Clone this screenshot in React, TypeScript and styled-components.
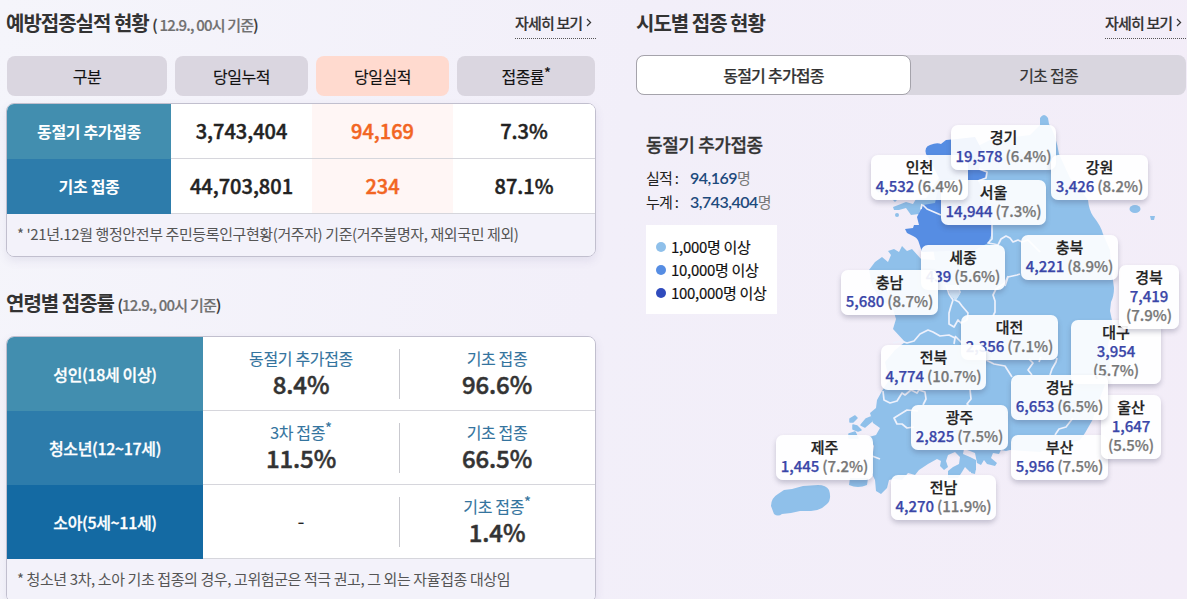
import { FC, ReactNode } from "react";
import styled, { createGlobalStyle } from "styled-components";

const GlobalStyle = createGlobalStyle`
  * {
    box-sizing: border-box;
  }
  body {
    margin: 0;
    font-family: "Noto Sans CJK KR", "Noto Sans", sans-serif;
    color: #222;
  }
`;

const Page = styled.div`
  display: flex;
  gap: 40px;
  width: 1187px;
  height: 599px;
  padding-left: 6px;
  overflow: hidden;
  background: linear-gradient(100deg, #f5f5fb 0%, #f2eff9 50%, #f3edf8 100%);
`;

const Column = styled.section<{ $width: number }>`
  flex: 0 0 ${({ $width }) => $width}px;
  display: flex;
  flex-direction: column;
`;

const Heading = styled.div<{ $top: number; $height: number }>`
  display: flex;
  flex: none;
  align-items: flex-start;
  justify-content: space-between;
  height: ${({ $height }) => $height}px;
  padding-top: ${({ $top }) => $top}px;
`;

const Title = styled.h2`
  margin: 0;
  font-size: 20px;
  font-weight: 700;
  line-height: 24px;
  letter-spacing: -1px;
  color: #333;
  white-space: pre;
`;

const BaseDate = styled.span`
  font-size: 15px;
  font-weight: 500;
  letter-spacing: -0.8px;
  color: #333;
  -webkit-text-stroke: 0.2px;

  em {
    font-style: normal;
    color: #707070;
  }
`;

const MoreLink = styled.a<{ $width: number }>`
  display: flex;
  align-items: center;
  width: ${({ $width }) => $width}px;
  height: 28px;
  padding-bottom: 5px;
  border-bottom: 1px dotted #555;
  font-size: 15px;
  font-weight: 500;
  letter-spacing: -0.85px;
  color: #333;
  white-space: nowrap;
  -webkit-text-stroke: 0.2px;

  svg {
    margin-left: 4px;
  }
`;

const PillRow = styled.div`
  display: grid;
  flex: none;
  grid-template-columns: 160px 133px 133px 138px;
  justify-content: space-between;
  height: 40px;
  padding: 0 1px;
  margin-bottom: 7px;
`;

const Pill = styled.div<{ $hot?: boolean }>`
  display: flex;
  align-items: center;
  justify-content: center;
  border-radius: 8px;
  background: ${({ $hot }) => ($hot ? "#ffdacf" : "#dad6e0")};
  font-size: 16px;
  letter-spacing: -0.5px;
  color: #111;
  -webkit-text-stroke: 0.15px;
`;

const Star = styled.sup`
  align-self: flex-start;
  font-size: 15px;
  line-height: 1;
  vertical-align: 4px;
`;

const Board = styled.div`
  flex: none;
  border: 1px solid #c1bfce;
  border-radius: 8px;
  overflow: hidden;
  box-shadow: 0 4px 10px rgba(90, 80, 140, 0.1);
`;

const BoardRow = styled.div<{ $columns: string; $height: number }>`
  display: grid;
  grid-template-columns: ${({ $columns }) => $columns};
  height: ${({ $height }) => $height}px;
  background: #fff;
`;

const RowHead = styled.div<{ $color: string; $bold?: boolean }>`
  display: flex;
  align-items: center;
  justify-content: center;
  padding-bottom: 1px;
  background: ${({ $color }) => $color};
  font-size: 16px;
  font-weight: ${({ $bold }) => ($bold ? 700 : 500)};
  letter-spacing: -0.35px;
  color: #fff;
  -webkit-text-stroke: ${({ $bold }) => ($bold ? 0 : "0.3px")};
`;

const Cell = styled.div<{ $hot?: boolean }>`
  display: flex;
  align-items: center;
  justify-content: center;
  padding-bottom: 1px;
  border-bottom: 1px solid #d6d6dc;
  background: ${({ $hot }) => ($hot ? "#fff6f5" : "#fff")};
  font-size: 20px;
  font-weight: 500;
  color: ${({ $hot }) => ($hot ? "#f26522" : "#222")};
  -webkit-text-stroke: 0.45px;
`;

const RateCell = styled.div<{ $divided?: boolean }>`
  position: relative;
  display: flex;
  flex-direction: column;
  align-items: center;
  justify-content: center;
  padding-bottom: 4px;
  border-bottom: 1px solid #d6d6dc;

  &::after {
    content: "";
    display: ${({ $divided }) => ($divided ? "block" : "none")};
    position: absolute;
    top: 12px;
    right: -1px;
    width: 1px;
    height: 50px;
    background: #c9c9cf;
  }
`;

const RateLabel = styled.div`
  display: flex;
  height: 24px;
  font-size: 16px;
  line-height: 24px;
  letter-spacing: -0.35px;
  color: #34749e;
  -webkit-text-stroke: 0.1px;
`;

const RateValue = styled.div`
  font-size: 24px;
  font-weight: 500;
  line-height: 28px;
  letter-spacing: -0.1px;
  color: #333;
  -webkit-text-stroke: 0.5px;
`;

const NoRate = styled.div`
  padding-top: 2px;
  font-size: 20px;
  color: #222;
`;

const Note = styled.p<{ $height: number }>`
  margin: 0;
  height: ${({ $height }) => $height}px;
  padding: 0 10px;
  background: #f3f2fa;
  font-size: 15px;
  line-height: 40px;
  letter-spacing: -0.4px;
  color: #555;
  white-space: nowrap;
`;

const Tabs = styled.div`
  display: flex;
  flex: none;
  width: 550px;
  height: 40px;
  border-radius: 8px;
  background: #d9d6df;
`;

const Tab = styled.button<{ $active?: boolean }>`
  flex: 0 0 275px;
  padding: 0 0 1px;
  border: ${({ $active }) => ($active ? "1px solid #a5a3ab" : "none")};
  border-radius: 8px;
  background: ${({ $active }) => ($active ? "#fff" : "transparent")};
  font-family: inherit;
  font-size: 16px;
  font-weight: ${({ $active }) => ($active ? 500 : 400)};
  letter-spacing: -0.75px;
  color: #333;
  -webkit-text-stroke: 0.2px;
`;

const MapArea = styled.div`
  position: relative;
  flex: 1;
  padding: 37px 10px 0;
`;

const MapTitle = styled.h3`
  margin: 0 0 10px;
  font-size: 18px;
  font-weight: 500;
  line-height: 24px;
  letter-spacing: -0.4px;
  color: #333;
  -webkit-text-stroke: 0.3px;
`;

const Stat = styled.div`
  display: flex;
  height: 24px;
  font-size: 15px;
  line-height: 24px;
  letter-spacing: -0.7px;
  color: #222;

  dt {
    width: 44px;
  }
  span {
    color: #777;
  }
`;

const StatNumber = styled.b`
  font-family: Lato, sans-serif;
  font-size: 16px;
  font-weight: 600;
  letter-spacing: -0.5px;
  color: #1d4a7c;
`;

const Legend = styled.ul`
  display: flex;
  flex-direction: column;
  width: 131px;
  height: 89px;
  margin: 11px 0 0;
  padding: 10px;
  background: #fff;
  list-style: none;
`;

const LegendItem = styled.li<{ $color: string }>`
  display: flex;
  align-items: center;
  gap: 5px;
  height: 23px;
  font-size: 15px;
  line-height: 22px;
  letter-spacing: -0.3px;
  color: #111;
  white-space: nowrap;
  -webkit-text-stroke: 0.15px;

  &::before {
    content: "";
    width: 10px;
    height: 10px;
    border-radius: 50%;
    background: ${({ $color }) => $color};
  }
`;

const MapSvg = styled.svg`
  position: absolute;
  top: 5px;
  left: 124px;
`;

const Pin = styled.div<{ $x: number; $y: number; $w: number; $h: number }>`
  position: absolute;
  left: ${({ $x }) => $x - 636}px;
  top: ${({ $y }) => $y - 95}px;
  width: ${({ $w }) => $w}px;
  height: ${({ $h }) => $h}px;
  padding-top: 3px;
  border-radius: 7px;
  background: rgba(255, 255, 255, 0.92);
  box-shadow: 0 3px 5px rgba(60, 60, 90, 0.25);
  font-size: 15px;
  font-weight: 500;
  line-height: 18px;
  text-align: center;
  white-space: nowrap;
  color: #222;
  -webkit-text-stroke: 0.25px;
`;

const PinValue = styled.div<{ $stacked?: boolean }>`
  display: flex;
  flex-direction: ${({ $stacked }) => ($stacked ? "column" : "row")};
  align-items: center;
  justify-content: center;
  column-gap: 3px;
  line-height: 19px;
  letter-spacing: -0.05px;
  color: #3a46a8;

  span {
    color: #777;
  }
`;

interface Region {
  name: string;
  count: string;
  rate: string;
  x: number;
  y: number;
  w: number;
  stacked?: boolean;
}

const regions: Region[] = [
  { name: "서울", count: "14,944", rate: "7.3%", x: 941, y: 180, w: 105 },
  { name: "부산", count: "5,956", rate: "7.5%", x: 1011, y: 435, w: 97 },
  { name: "대구", count: "3,954", rate: "5.7%", x: 1071, y: 320, w: 90, stacked: true },
  { name: "인천", count: "4,532", rate: "6.4%", x: 871, y: 155, w: 97 },
  { name: "광주", count: "2,825", rate: "7.5%", x: 911, y: 405, w: 97 },
  { name: "대전", count: "2,356", rate: "7.1%", x: 961, y: 315, w: 97 },
  { name: "울산", count: "1,647", rate: "5.5%", x: 1101, y: 395, w: 60, stacked: true },
  { name: "세종", count: "439", rate: "5.6%", x: 921, y: 245, w: 84 },
  { name: "경기", count: "19,578", rate: "6.4%", x: 951, y: 125, w: 105 },
  { name: "강원", count: "3,426", rate: "8.2%", x: 1051, y: 155, w: 97 },
  { name: "충북", count: "4,221", rate: "8.9%", x: 1021, y: 235, w: 97 },
  { name: "충남", count: "5,680", rate: "8.7%", x: 841, y: 270, w: 97 },
  { name: "전북", count: "4,774", rate: "10.7%", x: 881, y: 345, w: 105 },
  { name: "전남", count: "4,270", rate: "11.9%", x: 891, y: 475, w: 105 },
  { name: "경북", count: "7,419", rate: "7.9%", x: 1119, y: 265, w: 60, stacked: true },
  { name: "경남", count: "6,653", rate: "6.5%", x: 1011, y: 375, w: 97 },
  { name: "제주", count: "1,445", rate: "7.2%", x: 776, y: 435, w: 97 },
];

const ages: { name: string; color: string; rates: { label: string; star?: boolean; value: string }[] }[] = [
  {
    name: "성인(18세 이상)",
    color: "#428eaf",
    rates: [
      { label: "동절기 추가접종", value: "8.4%" },
      { label: "기초 접종", value: "96.6%" },
    ],
  },
  {
    name: "청소년(12~17세)",
    color: "#2d7cab",
    rates: [
      { label: "3차 접종", star: true, value: "11.5%" },
      { label: "기초 접종", value: "66.5%" },
    ],
  },
  {
    name: "소아(5세~11세)",
    color: "#146aa3",
    rates: [
      { label: "", value: "-" },
      { label: "기초 접종", star: true, value: "1.4%" },
    ],
  },
];

const More: FC<{ width: number }> = ({ width }) => (
  <MoreLink $width={width}>
    자세히 보기
    <svg width="6" height="9" viewBox="0 0 6 9" fill="none" stroke="#333" strokeWidth="1.2">
      <path d="M1 1l3.6 3.5L1 8" />
    </svg>
  </MoreLink>
);

const DateNote: FC<{ children: ReactNode }> = ({ children }) => (
  <BaseDate>
    (<em>{children}</em>)
  </BaseDate>
);

const KoreaMap: FC = () => (
  <MapSvg width="427" height="430" viewBox="760 100 427 430">
    <g fill="#8fc0ea">
      <path d="M1040 125L1040 118Q1044 112 1048 118L1049 124Q1056 135 1059 154L1070 178L1080 189L1088 200Q1089 210 1093 216Q1101 226 1103 234L1110 250Q1111 268 1114 288Q1114 296 1111 302L1110 311L1113 325L1108 345L1110 365L1105 385L1096 408L1093 419L1085 433L1080 440L1040 452L1010 450L1006 451L1001 450L999 454L993 453L991 458L997 463L995 466L987 464L984 460L981 465L977 463L975 453L970 451L964 449L963 454L970 457L976 460L976 470L970 472L965 467L962 472L958 478L948 478L948 471L953 467L959 464L960 457L955 452L948 455L946 461L948 467L944 470L940 466L941 461L937 459L928 464L919 470L915 475L908 473L902 480L894 479L889 480L887 488L881 494L876 491L875 480L871 472L872 458L874 446L869 437L876 435L880 428L873 423L870 413L876 408L877 400L882 391L889 380L885 362L895 350L905 342L893 329L896 319L892 306L880 300L872 285L869 270L875 262L882 257L888 262L891 255L888 251L894 249L899 252L902 246L907 251L912 249L921 259L935 260L925 200L950 160L990 140L1030 135Z" />
      <path d="M893 207L906 202L913 204L916 199L928 198L930 205L921 207L919 214L911 215L906 208L899 210L894 210Z" />
      <circle cx="897" cy="215" r="2" />
      <path d="M892 199l5 1 -2 2zM880 190l-8 -3 7 6z" />
      <g stroke="#8fc0ea" strokeWidth="1.5" strokeLinejoin="round">
        <path d="M850 419L855 416L857 418L853 422L850 422ZM861 425L866 419L871 417L872 421L865 427ZM853 425L857 426L861 430L858 431L853 429ZM849 434L855 432L858 438L849 438Z" />
      </g>
      <path d="M850 478H868L867 485Q858 489 849 485Z" />
      <path d="M771 506Q771 498 778 494L784 490L792 489L803 486L818 485Q826 485 829 490Q832 499 827 504Q820 511 811 511H800L791 513L782 514Q778 517 774 514Z" />
      <ellipse cx="1135" cy="209" rx="5.5" ry="4" />
      <path d="M1150 216h5l-1 4h-3z" />
      <path d="M884 482l3 4 -3 4zM971 467l5 1 -1 6 -4 -1z" />
    </g>
    <path
      fill="#568de3"
      d="M926 154Q924 147 930 145Q937 142 941 144L946 140L957 139L975 137L982 150L979 169L987 172L986 178L978 180L984 195L988 210L992 225V233L988 243L975 250L922 252L919 243Q918 238 913 236L907 233L905 229L913 228L914 225L919 225L917 217L921 209L923 205L935 203L940 180L930 160Z"
    />
    <g fill="none" stroke="#eef1fc" strokeWidth="1.7" strokeLinejoin="round">
      <path d="M979 169L987 172L986 178L978 181M923 205L927 209L934 212L941 215M921 209L922 204M992 225V239L988 243L994 244L998 245L1001 239L1006 236L1010 238L1013 242L1018 240L1022 242L1028 240L1040 252" />
      <path d="M1005 286L1008 277L1017 275L1020 274M1008 276L1005 283L996 289L993 295L995 301V312L993 316M946 285L949 294L953 300L951 306L949 313L949 324L954 327L958 320L961 323L967 320L968 313L962 306L959 302L955 300L960 292L957 285" />
      <path d="M893 343L901 341L907 343L914 341L920 334L928 330L933 332L940 336L949 335L955 338L954 344M955 336L962 343M986 360L994 364L1005 366L1012 377" />
      <path d="M883 391L884 400L890 403L897 401L902 393L905 395L911 390L917 393L919 390L925 392L926 399L923 405M970 389L971 399L967 404L970 407M918 411L907 410L894 418L897 424L902 424L907 428L914 427" />
      <path d="M1029 359L1033 363L1028 370L1032 375M1041 357L1039 362M1057 358L1056 362L1052 369L1050 375M1073 418L1066 427L1059 429L1055 435" />
      <path d="M872 456L880 459" />
    </g>
    <path d="M947 285h11l2 9 -4 6 -5 -3z" fill="#cfe3f6" />
  </MapSvg>
);

export default function App() {
  return (
    <>
      <GlobalStyle />
      <Page>
        <Column $width={590}>
          <Heading $top={11} $height={56}>
            <Title>
              예방접종실적 현황 <DateNote> 12.9., 00시 기준</DateNote>
            </Title>
            <More width={81} />
          </Heading>
          <PillRow>
            <Pill>구분</Pill>
            <Pill>당일누적</Pill>
            <Pill $hot>당일실적</Pill>
            <Pill>
              <span>
                접종률<Star>*</Star>
              </span>
            </Pill>
          </PillRow>
          <Board>
            <BoardRow $columns="164px 141px 141px 1fr" $height={55}>
              <RowHead $color="#428eaf" $bold>
                동절기 추가접종
              </RowHead>
              <Cell>3,743,404</Cell>
              <Cell $hot>94,169</Cell>
              <Cell>7.3%</Cell>
            </BoardRow>
            <BoardRow $columns="164px 141px 141px 1fr" $height={55}>
              <RowHead $color="#2d7cab" $bold>
                기초 접종
              </RowHead>
              <Cell>44,703,801</Cell>
              <Cell $hot>234</Cell>
              <Cell>87.1%</Cell>
            </BoardRow>
            <Note $height={42}>* '21년.12월 행정안전부 주민등록인구현황(거주자) 기준(거주불명자, 재외국민 제외)</Note>
          </Board>

          <Heading $top={34} $height={79}>
            <Title>
              연령별 접종률 <DateNote>12.9., 00시 기준</DateNote>
            </Title>
          </Heading>
          <Board>
            {ages.map((age) => (
              <BoardRow key={age.name} $columns="196px 196px 196px" $height={74}>
                <RowHead $color={age.color}>{age.name}</RowHead>
                {age.rates.map((rate, index) => (
                  <RateCell key={index} $divided={index === 0}>
                    {rate.label ? (
                      <>
                        <RateLabel>
                          {rate.label}
                          {rate.star && <Star>*</Star>}
                        </RateLabel>
                        <RateValue>{rate.value}</RateValue>
                      </>
                    ) : (
                      <NoRate>{rate.value}</NoRate>
                    )}
                  </RateCell>
                ))}
              </BoardRow>
            ))}
            <Note $height={43}>* 청소년 3차, 소아 기초 접종의 경우, 고위험군은 적극 권고, 그 외는 자율접종 대상임</Note>
          </Board>
        </Column>

        <Column $width={550}>
          <Heading $top={11} $height={55}>
            <Title>시도별 접종 현황</Title>
            <More width={81} />
          </Heading>
          <Tabs>
            <Tab $active>동절기 추가접종</Tab>
            <Tab>기초 접종</Tab>
          </Tabs>
          <MapArea>
            <MapTitle>동절기 추가접종</MapTitle>
            <Stat>
              <dt>실적 :</dt>
              <StatNumber>94,169</StatNumber>
              <span>명</span>
            </Stat>
            <Stat>
              <dt>누계 :</dt>
              <StatNumber>3,743,404</StatNumber>
              <span>명</span>
            </Stat>
            <Legend>
              <LegendItem $color="#8fc0ea">1,000명 이상</LegendItem>
              <LegendItem $color="#568de3">10,000명 이상</LegendItem>
              <LegendItem $color="#304bbd">100,000명 이상</LegendItem>
            </Legend>
            <KoreaMap />
            {regions.map(({ name, count, rate, x, y, w, stacked }) => (
              <Pin key={name} $x={x} $y={y} $w={w} $h={stacked ? 64 : 45}>
                {name}
                <PinValue $stacked={stacked}>
                  {count}
                  <span>({rate})</span>
                </PinValue>
              </Pin>
            ))}
          </MapArea>
        </Column>
      </Page>
    </>
  );
}
